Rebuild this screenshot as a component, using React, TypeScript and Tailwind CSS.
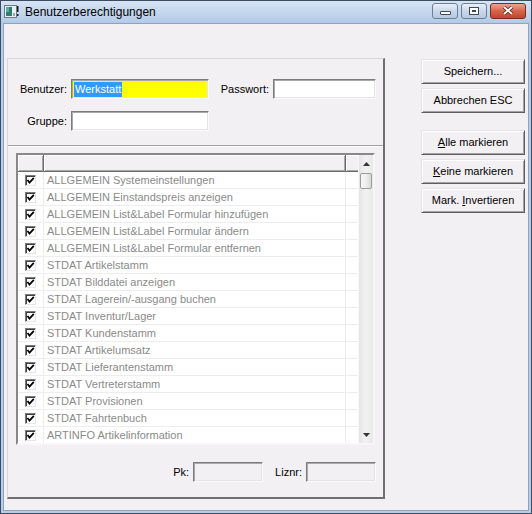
import React from "react";

const rows = [
  "ALLGEMEIN Systemeinstellungen",
  "ALLGEMEIN Einstandspreis anzeigen",
  "ALLGEMEIN List&Label Formular hinzufügen",
  "ALLGEMEIN List&Label Formular ändern",
  "ALLGEMEIN List&Label Formular entfernen",
  "STDAT Artikelstamm",
  "STDAT Bilddatei anzeigen",
  "STDAT Lagerein/-ausgang buchen",
  "STDAT Inventur/Lager",
  "STDAT Kundenstamm",
  "STDAT Artikelumsatz",
  "STDAT Lieferantenstamm",
  "STDAT Vertreterstamm",
  "STDAT Provisionen",
  "STDAT Fahrtenbuch",
  "ARTINFO Artikelinformation",
];

function Check() {
  return (
    <div className="w-[11px] h-[11px] border border-t-[#7a7a7a] border-l-[#7a7a7a] border-r-[#e6e6e6] border-b-[#e6e6e6] bg-white shadow-[inset_1px_1px_0_#3f3f3f] flex items-center justify-center">
      <svg width="9" height="9" viewBox="0 0 9 9">
        <path d="M1.5 4 L3.5 6.5 L7.8 1.8" stroke="#000" strokeWidth="1.8" fill="none" />
      </svg>
    </div>
  );
}

function Btn({ children }: { children: React.ReactNode }) {
  return (
    <div className="w-[104px] h-[25px] flex items-center justify-center bg-[#f3f0f3] border border-t-[#e6e3e6] border-l-[#e6e3e6] border-r-[#5e5e5e] border-b-[#5e5e5e] shadow-[inset_1px_1px_0_#ffffff,inset_-1px_-1px_0_#a3a3a3] text-[11px] text-black">
      {children}
    </div>
  );
}

function Input({ w, bg, children }: { w: string; bg: string; children?: React.ReactNode }) {
  return (
    <div
      className={`${w} ${bg} h-[20px] border border-t-[#7c7c7c] border-l-[#7c7c7c] border-r-[#fbfbfb] border-b-[#fbfbfb] shadow-[inset_1px_1px_0_#a9a9a9,inset_-1px_-1px_0_#e4e4e4] flex items-center px-[2px]`}
    >
      {children}
    </div>
  );
}

export default function App() {
  return (
    <div
      className="w-[532px] h-[514px] flex flex-col bg-[#b7cde9] border border-[#3b4c61] overflow-hidden"
      style={{ fontFamily: '"Liberation Sans", Arial, sans-serif' }}
    >
      {/* Title bar */}
      <div className="h-[22px] flex items-center bg-gradient-to-b from-[#d6e4f4] to-[#b3cae7] relative">
        <div className="ml-[3px] w-[16px] h-[14px] flex items-center">
          <svg width="16" height="14" viewBox="0 0 16 14">
            <rect x="0.5" y="0.5" width="12" height="12" fill="#e8eef2" stroke="#6b7a88" />
            <rect x="2" y="2" width="6" height="9" fill="#2f7f6e" />
            <rect x="2" y="2" width="3" height="5" fill="#5ab0a0" />
            <rect x="9" y="8" width="2" height="3" fill="#9aa6b0" />
            <rect x="13" y="1" width="1.5" height="6" fill="#1c1c1c" />
            <rect x="13" y="9" width="1.5" height="2" fill="#1c1c1c" />
          </svg>
        </div>
        <div className="ml-[5px] text-[12px] text-black">Benutzerberechtigungen</div>
        <div className="ml-auto mr-[5px] flex items-center gap-[3px] mt-[-3px]">
          <div className="w-[26px] h-[16px] rounded-[3px] border border-[#6d7f97] bg-gradient-to-b from-[#e9f0f8] via-[#c9d7ea] to-[#b5c8e2] flex items-center justify-center">
            <div className="w-[11px] h-[4px] mt-[5px] bg-white border border-[#3d4a5a] rounded-[1px]" />
          </div>
          <div className="w-[26px] h-[16px] rounded-[3px] border border-[#6d7f97] bg-gradient-to-b from-[#e9f0f8] via-[#c9d7ea] to-[#b5c8e2] flex items-center justify-center">
            <div className="w-[10px] h-[8px] border border-[#3d4a5a] bg-white flex items-center justify-center">
              <div className="w-[4px] h-[2px] bg-[#3d4a5a]" />
            </div>
          </div>
          <div className="w-[36px] h-[16px] rounded-[3px] border border-[#7a2c1f] bg-gradient-to-b from-[#e8a593] via-[#d5644b] to-[#c2442b] flex items-center justify-center">
            <svg width="12" height="9" viewBox="0 0 12 9">
              <path d="M2 1 L10 8 M10 1 L2 8" stroke="#5a1a10" strokeWidth="3.4" />
              <path d="M2 1 L10 8 M10 1 L2 8" stroke="#fff" strokeWidth="2" />
            </svg>
          </div>
        </div>
      </div>

      {/* Body */}
      <div className="flex-1 mx-[2px] mb-[2px] bg-[#f3f0f3] border border-[#8da2bd] flex items-start">
        {/* Left panel */}
        <div className="mt-[34px] ml-[3px] w-[378px] h-[441px] border-t border-l border-r-2 border-b-2 border-t-[#d9d6d9] border-l-[#d9d6d9] border-r-[#6f6f6f] border-b-[#6f6f6f] flex flex-col">
          <div className="mt-[20px] flex items-center h-[20px] text-[11px] text-black">
            <div className="w-[59px] text-right">Benutzer:</div>
            <div className="ml-[4px]">
              <Input w="w-[138px]" bg="bg-[#ffff00]">
                <span className="bg-[#3399ff] text-white leading-[15px] px-[1px]">Werkstatt</span>
              </Input>
            </div>
            <div className="w-[60px] text-right">Passwort:</div>
            <div className="ml-[4px]">
              <Input w="w-[103px]" bg="bg-white" />
            </div>
          </div>
          <div className="mt-[12px] flex items-center h-[20px] text-[11px] text-black">
            <div className="w-[59px] text-right">Gruppe:</div>
            <div className="ml-[4px]">
              <Input w="w-[138px]" bg="bg-white" />
            </div>
          </div>
          <div className="mt-[14px] h-[2px] border-t border-b border-t-[#a3a0a3] border-b-white" />

          {/* List */}
          <div className="mt-[6px] ml-[8px] w-[359px] h-[292px] border-2 border-t-[#888888] border-l-[#888888] border-r-[#f7f7f7] border-b-[#f7f7f7] flex overflow-hidden">
            <div className="flex-1 flex flex-col overflow-hidden">
              <div className="h-[17px] flex shrink-0 bg-[#f3f0f3]">
                <div className="w-[26px] h-full border-r border-b border-[#6a6a6a] shadow-[inset_1px_1px_0_#ffffff,inset_-1px_-1px_0_#a8a8a8]" />
                <div className="w-[302px] h-full border-r border-b border-[#6a6a6a] shadow-[inset_1px_1px_0_#ffffff,inset_-1px_-1px_0_#a8a8a8]" />
                <div className="flex-1 h-full border-b border-[#6a6a6a] shadow-[inset_1px_1px_0_#ffffff,inset_0_-1px_0_#a8a8a8]" />
              </div>
              <div className="flex-1 bg-white overflow-hidden">
                {rows.map((r) => (
                  <div key={r} className="h-[17px] flex border-b border-[#ededed]">
                    <div className="w-[26px] border-r border-[#ededed] flex items-center justify-center">
                      <Check />
                    </div>
                    <div className="w-[302px] border-r border-[#ededed] pl-[3px] flex items-center text-[11px] text-[#8a8a8a] whitespace-nowrap">
                      {r}
                    </div>
                    <div className="flex-1" />
                  </div>
                ))}
              </div>
            </div>
            {/* Scrollbar */}
            <div className="w-[15px] flex flex-col bg-gradient-to-r from-[#e6e4e6] via-[#f3f2f3] to-[#e9e8e9] border-l border-[#f8f8f8]">
              <div className="h-[17px] flex items-center justify-center shrink-0">
                <svg width="7" height="4" viewBox="0 0 7 4">
                  <path d="M0 4 L3.5 0 L7 4 Z" fill="#333" />
                </svg>
              </div>
              <div className="mt-[1px] mx-[1px] h-[16px] rounded-[2px] border border-[#9c9c9c] bg-gradient-to-r from-[#f7f7f7] via-[#eeeeee] to-[#d9d9d9]" />
              <div className="flex-1" />
              <div className="h-[17px] flex items-center justify-center shrink-0">
                <svg width="7" height="4" viewBox="0 0 7 4">
                  <path d="M0 0 L7 0 L3.5 4 Z" fill="#333" />
                </svg>
              </div>
            </div>
          </div>

          {/* Bottom fields */}
          <div className="mt-[17px] pr-[7px] flex justify-end items-center h-[20px] text-[11px] text-black">
            <div>Pk:</div>
            <div className="ml-[4px]">
              <Input w="w-[70px]" bg="bg-[#f3f0f3]" />
            </div>
            <div className="ml-[12px]">Liznr:</div>
            <div className="ml-[4px]">
              <Input w="w-[70px]" bg="bg-[#f3f0f3]" />
            </div>
          </div>
        </div>

        {/* Right buttons */}
        <div className="mt-[35px] ml-[36px] flex flex-col">
          <Btn>Speichern...</Btn>
          <div className="mt-[4px]">
            <Btn>Abbrechen ESC</Btn>
          </div>
          <div className="mt-[17px]">
            <Btn>
              <span>
                <u>A</u>lle markieren
              </span>
            </Btn>
          </div>
          <div className="mt-[4px]">
            <Btn>
              <span>
                <u>K</u>eine markieren
              </span>
            </Btn>
          </div>
          <div className="mt-[4px]">
            <Btn>
              <span>
                Mark. <u>I</u>nvertieren
              </span>
            </Btn>
          </div>
        </div>
      </div>
    </div>
  );
}
